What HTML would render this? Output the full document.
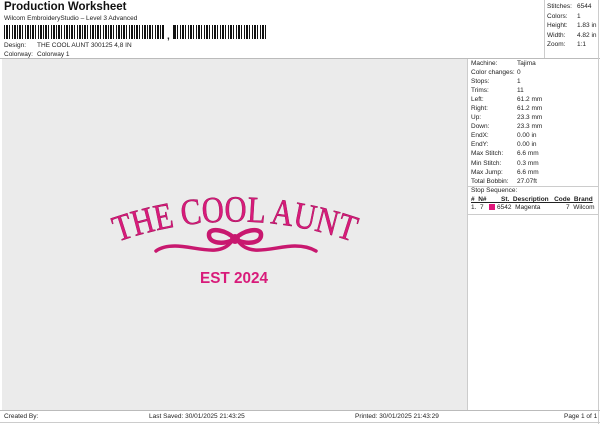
<!DOCTYPE html>
<html><head><meta charset="utf-8"><style>
*{margin:0;padding:0;box-sizing:border-box}
body{width:600px;height:424px;background:#fff;font-family:"Liberation Sans",sans-serif;color:#222;position:relative;overflow:hidden;font-size:7px}
.a{position:absolute;white-space:nowrap}
.bar{position:absolute;left:4px;top:25px;height:14px;width:260px;background:
repeating-linear-gradient(90deg,#111 0 1px,#fff 1px 2px,#111 2px 4px,#fff 4px 5px,#111 5px 6px,#fff 6px 8px,#111 8px 9px,#fff 9px 10px,#111 10px 12px,#fff 12px 13px)}
.bar2{position:absolute;left:174px;top:25px;height:14px;width:92px;background:
repeating-linear-gradient(90deg,#111 0 2px,#fff 2px 3px,#111 3px 4px,#fff 4px 6px,#111 6px 7px,#fff 7px 8px)}
</style></head><body>
<div class="a" style="left:4px;top:1px;font-size:11.5px;font-weight:bold;color:#111">Production Worksheet</div>
<div class="a" style="left:4px;top:15px;font-size:6.5px">Wilcom EmbroideryStudio – Level 3 Advanced</div>
<div class="bar"></div>
<div style="position:absolute;left:165px;top:25px;width:8px;height:14px;background:#fff"></div>
<div class="a" style="left:167px;top:31px;font-size:10px;font-weight:bold">,</div>
<div class="bar2"></div>
<div class="a" style="left:4px;top:42px;font-size:6.5px">Design:</div>
<div class="a" style="left:37px;top:42px;font-size:6.5px">THE COOL AUNT 300125 4,8 IN</div>
<div class="a" style="left:4px;top:51px;font-size:6.5px">Colorway:</div>
<div class="a" style="left:37px;top:51px;font-size:6.5px">Colorway 1</div>
<div style="position:absolute;left:0;top:58px;width:600px;border-top:1px solid #bbb"></div>
<div style="position:absolute;left:544px;top:0;width:1px;height:58px;background:#ccc"></div>
<div class="a" style="left:547px;top:2px;font-size:6.5px;line-height:9.6px">Stitches:<br>Colors:<br>Height:<br>Width:<br>Zoom:</div>
<div class="a" style="left:577px;top:2px;font-size:6.5px;line-height:9.6px">6544<br>1<br>1.83 in<br>4.82 in<br>1:1</div>
<div style="position:absolute;left:2px;top:59px;width:465px;height:351px;background:#ebebeb"></div>
<div style="position:absolute;left:467px;top:59px;width:1px;height:351px;background:#ccc"></div>
<div style="position:absolute;left:598px;top:0;width:1px;height:424px;background:#ccc"></div>
<div class="a" style="left:471px;top:59px;font-size:6.5px;line-height:9.05px">Machine:<br>Color changes:<br>Stops:<br>Trims:<br>Left:<br>Right:<br>Up:<br>Down:<br>EndX:<br>EndY:<br>Max Stitch:<br>Min Stitch:<br>Max Jump:<br>Total Bobbin:</div>
<div class="a" style="left:517px;top:59px;font-size:6.5px;line-height:9.05px">Tajima<br>0<br>1<br>11<br>61.2 mm<br>61.2 mm<br>23.3 mm<br>23.3 mm<br>0.00 in<br>0.00 in<br>6.6 mm<br>0.3 mm<br>6.6 mm<br>27.07ft</div>
<div style="position:absolute;left:468px;top:186px;width:130px;border-top:1px solid #ccc"></div>
<div class="a" style="left:471px;top:187px;font-size:6.5px">Stop Sequence:</div>
<div class="a" style="left:471px;top:196px;font-size:6.5px;font-weight:bold;text-decoration:underline">#&nbsp; N#&nbsp;&nbsp;&nbsp;&nbsp;&nbsp;&nbsp;&nbsp;&nbsp;St.&nbsp; Description&nbsp;&nbsp; Code&nbsp; Brand</div>
<div class="a" style="left:471px;top:204px;font-size:6.5px">1.&nbsp; 7</div>
<div style="position:absolute;left:489px;top:204px;width:6px;height:6px;background:#e0157a"></div>
<div class="a" style="left:497px;top:204px;font-size:6.5px">6542&nbsp; Magenta</div>
<div class="a" style="left:566px;top:204px;font-size:6.5px">7&nbsp; Wilcom</div>
<div style="position:absolute;left:468px;top:214px;width:130px;border-top:1px solid #ccc"></div>
<div style="position:absolute;left:0;top:410px;width:600px;border-top:1px solid #bbb"></div>
<div style="position:absolute;left:0;top:422px;width:600px;border-top:1px solid #ccc"></div>
<div class="a" style="left:4px;top:413px;font-size:6.5px">Created By:</div>
<div class="a" style="left:149px;top:413px;font-size:6.5px">Last Saved: 30/01/2025 21:43:25</div>
<div class="a" style="left:355px;top:413px;font-size:6.5px">Printed: 30/01/2025 21:43:29</div>
<div class="a" style="left:564px;top:413px;font-size:6.5px">Page 1 of 1</div>
<svg style="position:absolute;left:0;top:0" width="600" height="424">
<defs><path id="arc" d="M114,243 Q235,200 356,243"/></defs>
<text font-family="Liberation Serif,serif" font-size="37" fill="#d81b7a" stroke="#a0105a" stroke-width="0.5" text-anchor="middle"><textPath href="#arc" startOffset="50%" textLength="240" lengthAdjust="spacingAndGlyphs">THE COOL AUNT</textPath></text>
<g fill="none" stroke="#c8186f" stroke-width="4.5" stroke-linecap="round">
<path d="M235,239 C227,230 210,227 209,234 C208,244 225,245 235,239"/>
<path d="M235,239 C243,230 260,227 261,234 C262,244 245,245 235,239"/>
<path d="M232,241 C220,258 195,246 175,246 C166,246 160,248 156,251" stroke-width="3.5"/>
<path d="M238,241 C250,258 275,246 295,246 C304,246 311,248 316,251" stroke-width="3.5"/>
</g>
<circle cx="235" cy="239" r="5" fill="#c8186f"/>
<text x="234" y="283" font-family="Liberation Sans,sans-serif" font-weight="bold" font-size="16" fill="#d81b7a" text-anchor="middle" textLength="68" lengthAdjust="spacingAndGlyphs">EST 2024</text>
</svg>
</body></html>
